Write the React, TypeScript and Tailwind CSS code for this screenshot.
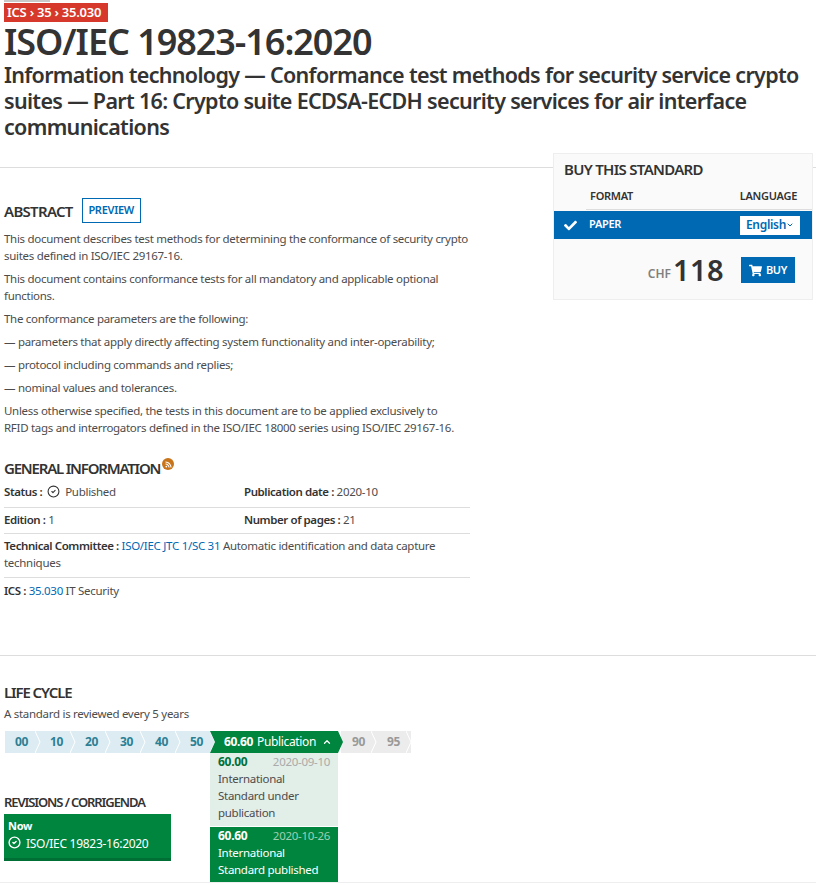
import { ChevronDown, ChevronUp, CircleCheck } from "lucide-react";
import { FaCheck, FaRss, FaShoppingCart } from "react-icons/fa";
import type { ReactNode } from "react";

const font = "font-['Noto_Sans',sans-serif]";

function Heading({ children, tight = "tracking-[-1.1px]" }: { children: ReactNode; tight?: string }) {
  return <h3 className={`text-[15px] font-semibold uppercase leading-5 text-[#333] ${tight}`}>{children}</h3>;
}

function Label({ children }: { children: ReactNode }) {
  return <strong className="font-semibold tracking-[-0.42px] text-[#333]">{children}</strong>;
}

function Para({ children }: { children: ReactNode }) {
  return <p className="mb-[6px] leading-[17px]">{children}</p>;
}

function Stage({ code, done = false }: { code: string; done?: boolean }) {
  return (
    <div className={`relative flex h-[22px] w-[35px] items-center justify-center text-[12px] font-bold ${done ? "bg-[#ececec] text-[#999]" : "bg-[#dcecf2] pr-[2px] text-[#2d7f94]"}`}>
      {code}
      <svg className="absolute -right-[1px] top-0 z-[1]" width="6" height="22" viewBox="0 0 6 22" fill="none">
        <path d="M0 0 L5 11 L0 22" stroke="#fff" strokeWidth="1" />
      </svg>
    </div>
  );
}

export default function App() {
  return (
    <div className={`${font} min-h-[885px] bg-white text-[11.5px] tracking-[-0.29px] text-[#4c4c4c]`}>
      <div className="pl-1 pt-[3px]">
        <div className="absolute left-1 top-0 h-[2px] w-[46px] bg-[#c9c9c9]" />
        <div className="flex h-[19px] w-[104px] items-center bg-[#d6392b] pl-[3px] text-[13px] font-semibold leading-none tracking-[-0.25px] text-white">
          ICS › 35 › 35.030
        </div>
        <h1 className="mt-[1px] text-[36px] font-semibold leading-[38px] tracking-[-1.05px] text-[#333]">ISO/IEC 19823-16:2020</h1>
        <h2 className="mt-[1px] w-[810px] text-[21.5px] font-semibold leading-[26px] tracking-[-0.68px] text-[#333]">
          Information technology — Conformance test methods for security service crypto suites — Part 16: Crypto suite ECDSA-ECDH security services for air interface communications
        </h2>
      </div>

      <div className="mt-[27px] border-t border-[#ddd]">
        <div className="flex items-start justify-between pr-[3px]">
          <section className="w-[470px] pl-1 pt-[30px]">
            <div className="flex items-center gap-[9px]">
              <Heading tight="tracking-[-0.7px]">Abstract</Heading>
              <span className="flex h-[25px] w-[59px] items-center justify-center border border-[#0069b4] text-[11px] font-semibold text-[#0069b4]">PREVIEW</span>
            </div>
            <div className="mt-[7px]">
              <Para>This document describes test methods for determining the conformance of security crypto suites defined in ISO/IEC 29167-16.</Para>
              <Para>This document contains conformance tests for all mandatory and applicable optional functions.</Para>
              <Para>The conformance parameters are the following:</Para>
              <Para>— parameters that apply directly affecting system functionality and inter-operability;</Para>
              <Para>— protocol including commands and replies;</Para>
              <Para>— nominal values and tolerances.</Para>
              <div className="w-[450px]">
                <Para>Unless otherwise specified, the tests in this document are to be applied exclusively to RFID tags and interrogators defined in the ISO/IEC 18000 series using ISO/IEC 29167-16.</Para>
              </div>
            </div>

            <div className="mt-[22px] flex items-start">
              <Heading tight="tracking-[-1.2px]">General information</Heading>
              <span className="ml-[2px] flex h-3 w-3 items-center justify-center rounded-full bg-[#c8741a] text-white">
                <FaRss size={7} />
              </span>
            </div>
            <div className="mt-[1px]">
              <div className="grid h-[29px] grid-cols-[240px_1fr] items-center border-b border-[#ddd] pb-[2px]">
                <span className="flex items-center gap-1">
                  <Label>Status :</Label>
                  <CircleCheck size={13} strokeWidth={2} className="mx-[1px] -mt-[2px] text-[#333]" />
                  Published
                </span>
                <span><Label>Publication date :</Label> 2020-10</span>
              </div>
              <div className="grid h-[26px] grid-cols-[240px_1fr] items-center border-b border-[#ddd] pb-[1px]">
                <span><Label>Edition :</Label> 1</span>
                <span><Label>Number of pages :</Label> 21</span>
              </div>
              <p className="border-b border-[#ddd] pb-[6px] pt-[3px] leading-[17px]">
                <Label>Technical Committee :</Label> <span className="text-[#0069b4]">ISO/IEC JTC 1/SC 31</span> Automatic identification and data capture techniques
              </p>
              <p className="pb-[5px] pt-[4px] leading-[17px]">
                <Label>ICS :</Label> <span className="text-[#0069b4]">35.030</span> IT Security
              </p>
            </div>
          </section>

          <aside className="relative -mt-[15px] h-[147px] w-[260px] border border-[#eee] bg-[#fafafa]">
            <div className="pl-[10px] pt-[5px] text-[15px] font-semibold uppercase leading-5 tracking-[-0.7px] text-[#333]">Buy this standard</div>
            <div className="ml-8 mt-[9px] flex h-[22px] justify-between border-b border-[#ddd] pl-[4px] pr-[15px] text-[11px] font-semibold text-[#333]">
              <span>FORMAT</span>
              <span>LANGUAGE</span>
            </div>
            <div className="mt-[1px] flex h-7 items-center bg-[#0069b4] pl-[10px] pr-3 text-white">
              <FaCheck size={13} />
              <span className="ml-[12px] -mt-[2px] text-[11px] font-semibold">PAPER</span>
              <span className="ml-auto flex h-[19px] w-[60px] items-center justify-center bg-white text-[12px] font-semibold text-[#0069b4]">
                English
                <ChevronDown size={8} strokeWidth={3} />
              </span>
            </div>
            <div className="mt-[18px] flex items-center justify-end pr-[17px]">
              <span className="mt-[7px] text-[12px] font-semibold tracking-normal text-[#808080]">CHF</span>
              <span className="ml-[2px] text-[29px] font-semibold leading-[26px] tracking-[0.4px] text-[#333]">118</span>
              <span className="ml-[17px] flex h-[26px] w-[54px] items-center justify-center gap-[4px] bg-[#0069b4] text-[11px] font-semibold text-white">
                <FaShoppingCart size={13} />
                BUY
              </span>
            </div>
          </aside>
        </div>
      </div>

      <div className="mt-[51px] border-t border-[#ddd] pl-1 pt-[26px]">
        <Heading>Life cycle</Heading>
        <p className="mt-[3px] leading-[17px]">A standard is reviewed every 5 years</p>
        <div className="ml-[1px] mt-[9px] flex">
          {["00", "10", "20", "30", "40", "50"].map((code) => (
            <Stage key={code} code={code} />
          ))}
          <div className="relative z-10 -ml-[5px] -mr-[2px] flex h-[22px] w-[133px] items-center justify-center bg-[#00853f] pl-[3px] text-[12px] tracking-[-0.36px] text-white [clip-path:polygon(0_0,calc(100%-5px)_0,100%_50%,calc(100%-5px)_100%,0_100%,5px_50%)]">
            <strong className="font-bold">60.60</strong>
            <span className="ml-1">Publication</span>
            <ChevronUp size={10} strokeWidth={3} className="ml-[6px]" />
          </div>
          <Stage code="90" done />
          <Stage code="95" done />
        </div>
        <div className="flex">
          <div className="w-[206px] pt-[39px]">
            <div className="text-[13px] font-semibold uppercase leading-5 tracking-[-1.1px] text-[#333]">Revisions / Corrigenda</div>
            <div className="mt-[2px] h-[47px] w-[167px] border-b-[3px] border-[#006f35] bg-[#00853f] px-[4px] pt-[5px] text-white">
              <div className="text-[11px] font-bold leading-[14px]">Now</div>
              <div className="mt-[2px] flex items-center gap-[5px] text-[12px] leading-[17px]">
                <CircleCheck size={13} strokeWidth={2.5} className="-mt-[2px]" />
                ISO/IEC 19823-16:2020
              </div>
            </div>
          </div>
          <div className="w-[128px] leading-[17px]">
            <div className="h-[73px] bg-[#e2eee8] px-2">
              <div className="flex justify-between">
                <strong className="text-[12px] font-bold text-[#00703a]">60.00</strong>
                <span className="text-[#aaa]">2020-09-10</span>
              </div>
              International Standard under publication
            </div>
            <div className="h-[56px] border-t border-white bg-[#00853f] px-2 text-white">
              <div className="flex justify-between">
                <strong className="text-[12px] font-bold">60.60</strong>
                <span className="text-[#9fcfb3]">2020-10-26</span>
              </div>
              International Standard published
            </div>
          </div>
        </div>
      </div>
      <div className="border-t border-[#eee]" />
    </div>
  );
}
